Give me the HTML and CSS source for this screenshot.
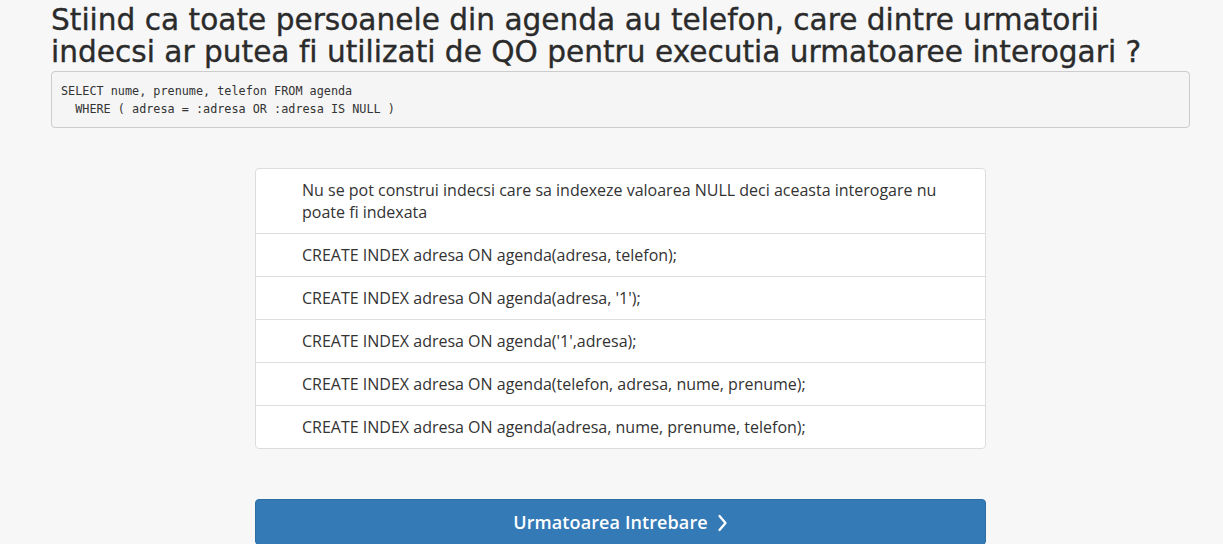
FILE: index.html
```html
<!DOCTYPE html>
<html>
<head>
<meta charset="utf-8">
<link rel="stylesheet" href="styles.css">
</head>
<body>
<div class="container">
  <h1 class="question">Stiind ca toate persoanele din agenda au telefon, care dintre urmatorii indecsi ar putea fi utilizati de QO pentru executia urmatoaree interogari ?</h1>
  <pre class="code">SELECT nume, prenume, telefon FROM agenda
  WHERE ( adresa = :adresa OR :adresa IS NULL )</pre>
  <ul class="answers">
    <li class="answer">Nu se pot construi indecsi care sa indexeze valoarea NULL deci aceasta interogare nu poate fi indexata</li>
    <li class="answer">CREATE INDEX adresa ON agenda(adresa, telefon);</li>
    <li class="answer">CREATE INDEX adresa ON agenda(adresa, '1');</li>
    <li class="answer">CREATE INDEX adresa ON agenda('1',adresa);</li>
    <li class="answer">CREATE INDEX adresa ON agenda(telefon, adresa, nume, prenume);</li>
    <li class="answer">CREATE INDEX adresa ON agenda(adresa, nume, prenume, telefon);</li>
  </ul>
  <button class="next">Urmatoarea Intrebare
    <svg class="chev" width="11" height="18" viewBox="0 0 11 18"><path d="M2.5 2 L8.5 9 L2.5 16" fill="none" stroke="#fff" stroke-width="2.3" stroke-linecap="round" stroke-linejoin="round"/></svg>
  </button>
</div>
</body>
</html>
```
FILE: styles.css
```css
html, body {
  margin: 0;
  padding: 0;
  background: #f7f7f7;
}
body {
  font-family: "Open Sans", sans-serif;
  color: #333;
}
.container {
  margin: 0 33px 0 51px;
  padding-top: 4px;
}
.question {
  font-family: "DejaVu Sans", sans-serif;
  font-weight: normal;
  font-size: 29.6px;
  line-height: 32px;
  color: #2b2b2b;
  -webkit-text-stroke: 0.35px #2b2b2b;
  margin: 0 0 3px 0;
  font-variant-ligatures: none;
}
.code {
  margin: 0;
  background: #f5f5f5;
  border: 1px solid #ccc;
  border-radius: 4px;
  padding: 10px 9px 9px 9px;
  font-family: "DejaVu Sans Mono", monospace;
  font-size: 11.8px;
  line-height: 18px;
  color: #333;
}
.answers {
  list-style: none;
  width: 729px;
  margin: 40px auto 0 auto;
  padding: 0;
  background: #fff;
  border: 1px solid #ddd;
  border-radius: 4px;
}
.answer {
  padding: 10px 20px 10px 46px;
  font-size: 16px;
  line-height: 22px;
  border-top: 1px solid #ddd;
}
.answer:first-child {
  border-top: none;
}
.next {
  display: flex;
  align-items: center;
  justify-content: center;
  gap: 9px;
  width: 731px;
  height: 46px;
  margin: 50px auto 0 auto;
  background: #337ab7;
  border: 1px solid #2e6da4;
  border-radius: 4px;
  color: #fff;
  font-family: "Open Sans", sans-serif;
  font-weight: 600;
  font-size: 18px;
  letter-spacing: 0.1px;
  padding: 0;
}
.chev {
  margin-top: 1px;
}
```
